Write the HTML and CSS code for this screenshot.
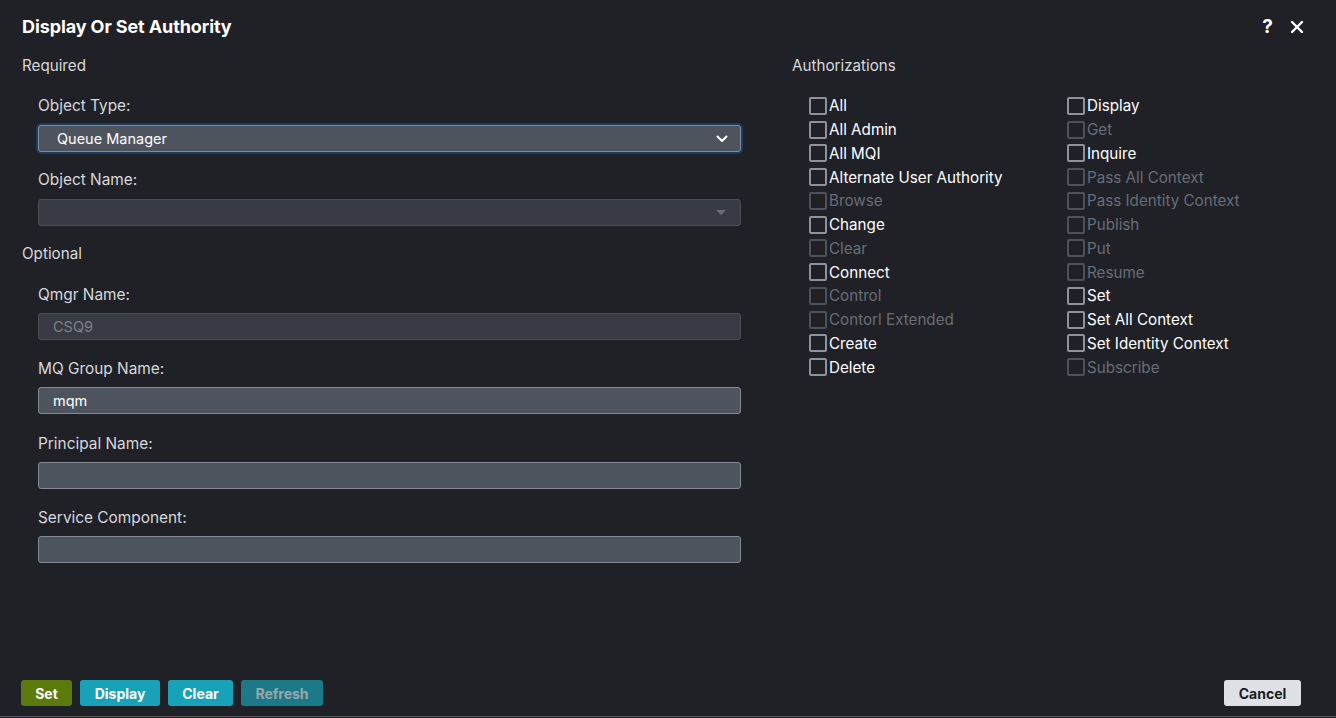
FILE: index.html
```html
<!DOCTYPE html>
<html>
<head>
<meta charset="utf-8">
<link rel="stylesheet" href="styles.css">
</head>
<body>
<div class="dialog">
  <div class="header">
    <div class="title">Display Or Set Authority</div>
    <div class="hicons">
      <span class="hicon">?</span>
      <svg class="close" width="14" height="14" viewBox="0 0 14 14"><path d="M2 2 L12 12 M12 2 L2 12" stroke="#fff" stroke-width="2.4" stroke-linecap="round"/></svg>
    </div>
  </div>
  <div class="body">
    <div class="leftcol">
      <div class="section">Required</div>
      <div class="fields">
        <div class="field">
          <div class="label">Object Type:</div>
          <div class="select focus"><span>Queue Manager</span>
            <svg width="12" height="8" viewBox="0 0 12 8"><path d="M1.5 1.5 L6 6 L10.5 1.5" stroke="#fff" stroke-width="2" fill="none" stroke-linecap="round" stroke-linejoin="round"/></svg>
          </div>
        </div>
        <div class="field">
          <div class="label">Object Name:</div>
          <div class="select disabled"><span></span>
            <svg width="10" height="6" viewBox="0 0 10 6"><path d="M0 0 L10 0 L5 5 Z" fill="#6a6d74"/></svg>
          </div>
        </div>
      </div>
      <div class="section opt">Optional</div>
      <div class="fields optfields">
        <div class="field">
          <div class="label">Qmgr Name:</div>
          <div class="input disabled">CSQ9</div>
        </div>
        <div class="field">
          <div class="label">MQ Group Name:</div>
          <div class="input">mqm</div>
        </div>
        <div class="field">
          <div class="label">Principal Name:</div>
          <div class="input"></div>
        </div>
        <div class="field">
          <div class="label">Service Component:</div>
          <div class="input"></div>
        </div>
      </div>
    </div>
    <div class="rightcol">
      <div class="section">Authorizations</div>
      <div class="checks">
        <div class="col">
          <div class="cb"><span class="box"></span>All</div>
          <div class="cb"><span class="box"></span>All Admin</div>
          <div class="cb"><span class="box"></span>All MQI</div>
          <div class="cb"><span class="box"></span>Alternate User Authority</div>
          <div class="cb dis"><span class="box"></span>Browse</div>
          <div class="cb"><span class="box"></span>Change</div>
          <div class="cb dis"><span class="box"></span>Clear</div>
          <div class="cb"><span class="box"></span>Connect</div>
          <div class="cb dis"><span class="box"></span>Control</div>
          <div class="cb dis"><span class="box"></span>Contorl Extended</div>
          <div class="cb"><span class="box"></span>Create</div>
          <div class="cb"><span class="box"></span>Delete</div>
        </div>
        <div class="col">
          <div class="cb"><span class="box"></span>Display</div>
          <div class="cb dis"><span class="box"></span>Get</div>
          <div class="cb"><span class="box"></span>Inquire</div>
          <div class="cb dis"><span class="box"></span>Pass All Context</div>
          <div class="cb dis"><span class="box"></span>Pass Identity Context</div>
          <div class="cb dis"><span class="box"></span>Publish</div>
          <div class="cb dis"><span class="box"></span>Put</div>
          <div class="cb dis"><span class="box"></span>Resume</div>
          <div class="cb"><span class="box"></span>Set</div>
          <div class="cb"><span class="box"></span>Set All Context</div>
          <div class="cb"><span class="box"></span>Set Identity Context</div>
          <div class="cb dis"><span class="box"></span>Subscribe</div>
        </div>
      </div>
    </div>
  </div>
  <div class="footer">
    <div class="btns">
      <button class="btn set">Set</button>
      <button class="btn teal">Display</button>
      <button class="btn teal">Clear</button>
      <button class="btn refresh">Refresh</button>
    </div>
    <button class="btn cancel">Cancel</button>
  </div>
  <div class="bottomline"></div>
</div>
</body>
</html>
```
FILE: styles.css
```css
html, body {
  margin: 0;
  padding: 0;
  background: #202127;
}
body {
  font-family: Inter, "Noto Sans", sans-serif;
  color: #d6d8dc;
  font-size: 15px;
}
.dialog {
  width: 1336px;
  height: 718px;
  display: flex;
  flex-direction: column;
  box-sizing: border-box;
  position: relative;
}
.header {
  display: flex;
  justify-content: space-between;
  align-items: center;
  padding: 17px 32px 0 22px;
  height: 20px;
}
.title {
  font-size: 18px;
  font-weight: 700;
  color: #fff;
  line-height: 20px;
  letter-spacing: -0.1px;
}
.hicons {
  display: flex;
  align-items: center;
  gap: 17px;
}
.hicon {
  font-size: 19px;
  font-weight: 700;
  color: #fff;
  line-height: 20px;
}
.close { display: block; }
.body {
  display: flex;
  padding: 19px 0 0 22px;
  gap: 51px;
  flex: 1;
}
.leftcol {
  width: 719px;
}
.section {
  line-height: 20px;
  font-size: 15.2px;
  color: #d6d8dc;
}
.section.opt {
  margin-top: 18px;
}
.fields {
  padding-left: 16px;
  display: flex;
  flex-direction: column;
  gap: 17px;
  margin-top: 19px;
}
.fields.optfields {
  margin-top: 20px;
  gap: 18.3px;
}
.field .label {
  line-height: 20px;
  font-size: 15.4px;
  color: #d6d8dc;
  margin-bottom: 10px;
  position: relative;
  top: 1px;
}
.optfields .label { margin-bottom: 9px; }
.select, .input {
  height: 27px;
  box-sizing: border-box;
  border: 1px solid #838a95;
  background: #4e545e;
  border-radius: 3px;
  display: flex;
  align-items: center;
  padding: 0 12px 0 14px;
  font-size: 14.5px;
  color: #fff;
}
.select {
  justify-content: space-between;
  padding-left: 18px;
}
.select.focus {
  box-shadow: 0 0 0 2px #1c3b61;
}
.select.disabled, .input.disabled {
  background: #393b44;
  border-color: #4b4e57;
  color: #7c8089;
}
.select.disabled { padding-right: 14px; }
.rightcol {
  flex: 1;
}
.checks {
  display: flex;
  padding-left: 17px;
  margin-top: 18px;
}
.col {
  width: 258px;
  display: flex;
  flex-direction: column;
}
.cb {
  display: flex;
  align-items: center;
  height: 23.75px;
  font-size: 15.2px;
  color: #ffffff;
}
.cb .box {
  width: 14px;
  height: 14px;
  border: 2px solid #8d929b;
  border-radius: 2px;
  margin-right: 2px;
  flex: none;
}
.cb.dis { color: #686d76; }
.cb.dis .box { border-color: #4d5159; }
.footer {
  display: flex;
  justify-content: space-between;
  align-items: center;
  padding: 0 35px 0 21px;
  height: 26px;
  margin-bottom: 10px;
}
.btns {
  display: flex;
  gap: 8px;
}
.btn {
  font-family: Inter, "Noto Sans", sans-serif;
  font-weight: 700;
  font-size: 14px;
  height: 26px;
  border: none;
  border-radius: 3px;
  color: #fff;
  padding: 0;
}
.btn.set { background: #5a7a0c; width: 51px; }
.btn.teal { background: #17a2b8; }
.btn.teal:nth-child(2) { width: 80px; }
.btn.teal:nth-child(3) { width: 65px; }
.btn.refresh { background: #1b7988; color: #9aa7ab; width: 82px; }
.btn.cancel { background: #dfe1e6; color: #1b1c20; width: 77px; }
.bottomline {
  height: 1px;
  background: #55575d;
  margin-bottom: 1px;
}
```
